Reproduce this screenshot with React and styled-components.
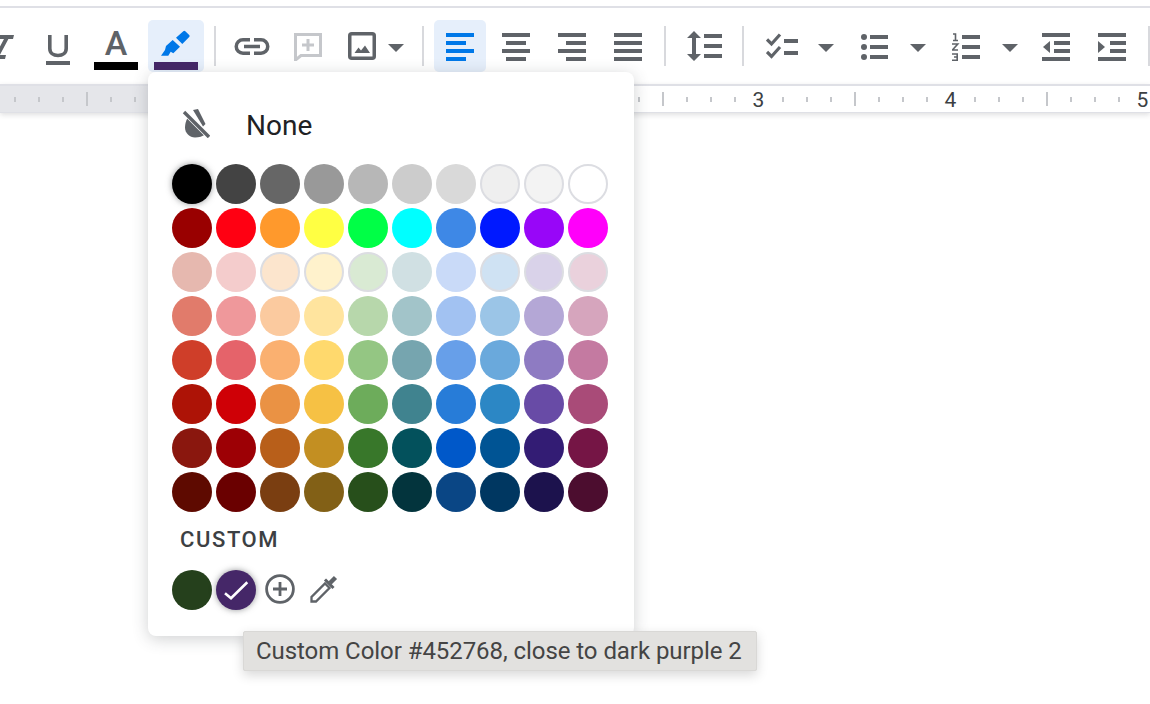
import React from "react";
import styled, { createGlobalStyle } from "styled-components";

const GREY = "#5f6368";
const BLUE = "#0078e8";

const PALETTE = [
  ["#000000", "#434343", "#666666", "#999999", "#b7b7b7", "#cccccc", "#d9d9d9", "#efefef", "#f3f3f3", "#ffffff"],
  ["#990000", "#ff0012", "#ff992c", "#ffff43", "#00ff46", "#00ffff", "#3e88e6", "#0019ff", "#9806f8", "#ff00fa"],
  ["#e6b8af", "#f4cccc", "#fce5cd", "#fff2cc", "#d9ead3", "#d0e0e3", "#c9daf8", "#cfe2f3", "#d9d2e9", "#ead1dc"],
  ["#e17b6b", "#ef989b", "#fbca9f", "#ffe49e", "#b7d7ab", "#a2c4c9", "#a2c2f2", "#9bc5e7", "#b4a7d6", "#d6a5bd"],
  ["#cf3e29", "#e5636a", "#fab070", "#ffd96d", "#94c683", "#76a5af", "#679fe9", "#6aa9dc", "#8e7bc2", "#c47aa1"],
  ["#ad1306", "#cf0006", "#ea9244", "#f6c144", "#6dac5b", "#40838f", "#277cd8", "#2c87c5", "#684ba6", "#a94b78"],
  ["#8a170e", "#9d0005", "#b85f1a", "#c38f22", "#38772a", "#03515c", "#0058c9", "#005494", "#331c74", "#751545"],
  ["#5e0a00", "#6a0000", "#7a3e11", "#826016", "#274f1b", "#03343d", "#0a4685", "#003761", "#1c124d", "#4c0d2f"]
];

const OUTLINED = {
  0: [7, 8, 9],
  2: [2, 3, 4, 7, 8, 9]
};

const RULER_CELLS = Array.from({ length: 48 }, (_, i) => i);

const App = () => (
  <Page>
    <GlobalStyle />
    <TopLine />
    <Toolbar>
      <Tool $w={54} $top={15}>
        <ItalicIcon />
      </Tool>
      <Tool $w={56} $top={15}>
        <UnderlineIcon />
      </Tool>
      <Tool $w={60} $top={11} $column>
        <LetterA>A</LetterA>
        <ColorBar $color="#000000" $gap={7} />
      </Tool>
      <Tool $w={56} $ml={2} $top={10} $column $active>
        <PenIcon />
        <ColorBar $color="#452768" $gap={5} />
      </Tool>
      <Separator $ml={10} />
      <Tool $w={60} $ml={6} $top={18}>
        <LinkIcon />
      </Tool>
      <Tool $w={52} $top={13}>
        <CommentIcon />
      </Tool>
      <Tool $w={52} $ml={2} $top={12}>
        <ImageIcon />
      </Tool>
      <Caret />
      <Separator $ml={18} />
      <Tool $w={52} $ml={10} $top={13} $active>
        <LinesIcon color={BLUE} rows={[[0, 28], [0, 20], [0, 28], [0, 20]]} />
      </Tool>
      <Tool $w={56} $ml={2} $top={13}>
        <LinesIcon rows={[[0, 28], [4, 20], [0, 28], [4, 20]]} />
      </Tool>
      <Tool $w={56} $top={13}>
        <LinesIcon rows={[[0, 28], [8, 20], [0, 28], [8, 20]]} />
      </Tool>
      <Tool $w={56} $top={13}>
        <LinesIcon rows={[[0, 28], [0, 28], [0, 28], [0, 28]]} />
      </Tool>
      <Separator $ml={8} />
      <Tool $w={60} $ml={8} $top={11}>
        <LineSpacingIcon />
      </Tool>
      <Separator $ml={8} />
      <Tool $w={72} $ml={2} $top={13}>
        <ChecklistIcon />
      </Tool>
      <Caret />
      <Tool $w={72} $ml={4} $top={13}>
        <BulletsIcon />
      </Tool>
      <Caret />
      <Tool $w={72} $ml={4} $top={13}>
        <NumberedIcon />
      </Tool>
      <Caret />
      <Tool $w={56} $ml={10} $top={13}>
        <IndentIcon />
      </Tool>
      <Tool $w={56} $top={13}>
        <IndentIcon increase />
      </Tool>
      <Separator $ml={8} />
    </Toolbar>
    <Ruler>
      {RULER_CELLS.map(i => {
        const step = i % 8;
        return (
          <RulerCell key={i}>
            {step === 7 ? (
              <RulerDigit>{(i + 1) / 8 - 1}</RulerDigit>
            ) : (
              <Tick $major={step === 3} />
            )}
          </RulerCell>
        );
      })}
    </Ruler>

    <Popup>
      <NoneRow>
        <NoneIcon />
        <NoneLabel>None</NoneLabel>
      </NoneRow>
      <SwatchGrid>
        {PALETTE.map((row, r) =>
          row.map((color, c) => (
            <Swatch
              key={color + r + c}
              $color={color}
              $outlined={OUTLINED[r] && OUTLINED[r].includes(c)}
              $focused={r === 0 && c === 0}
            />
          ))
        )}
      </SwatchGrid>
      <CustomLabel>CUSTOM</CustomLabel>
      <CustomRow>
        <Swatch $color="#25401c" />
        <Swatch $color="#452768" $focused>
          <CheckIcon />
        </Swatch>
        <PlusIcon />
        <DropperIcon />
      </CustomRow>
    </Popup>

    <Tooltip>Custom Color #452768, close to dark purple 2</Tooltip>
  </Page>
);

export default App;

const ItalicIcon = () => (
  <svg width="40" height="24" viewBox="-17 35 40 24" fill={GREY}>
    <path d="M-2 35H14L13 39H8.4L-0.2 55H6L5 59H-11L-10 55H-4.6L4 39H-3Z" />
  </svg>
);

const UnderlineIcon = () => (
  <svg width="24" height="30" viewBox="0 0 24 30">
    <path d="M3.8 0V13.5C3.8 18 7.3 20.5 12 20.5S20.2 18 20.2 13.5V0" fill="none" stroke={GREY} strokeWidth="3.6" />
    <rect y="26" width="24" height="4" fill={GREY} />
  </svg>
);

const PenIcon = () => (
  <svg width="32" height="27" viewBox="0 0 32 27" fill={BLUE}>
    <path d="M16 7.7L23.3 1.2Q24.3 0.3 25.3 1.2L29.2 5Q30.2 6 29.2 7L22.3 14Z" />
    <path d="M12.7 10L20 16.7L13.3 23.3L10.7 21.7L8.3 25.7H1L5 20L6 16Z" />
  </svg>
);

const LinkIcon = () => (
  <svg width="36" height="17" viewBox="0 0 36 17" fill="none" stroke={GREY} strokeWidth="3.5">
    <path d="M16 1.75H9a6.75 6.75 0 0 0 0 13.5H16" />
    <path d="M20 1.75H27a6.75 6.75 0 0 1 0 13.5H20" />
    <path d="M10 8.5H26" />
  </svg>
);

const CommentIcon = () => (
  <svg width="28" height="28" viewBox="0 0 28 28" fill="none" stroke="#c5c7cb" strokeWidth="3">
    <path d="M1.5 1.5H26.5V22.5H7L1.5 27Z" />
    <path d="M14 6V18M8 12H20" />
  </svg>
);

const ImageIcon = () => (
  <svg width="28" height="28" viewBox="0 0 28 28">
    <rect x="1.75" y="1.75" width="24.5" height="24.5" rx="2" fill="none" stroke={GREY} strokeWidth="3.5" />
    <path d="M6.5 21L10.5 15.5L13 18.5L17 13.5L22 21Z" fill={GREY} />
  </svg>
);

const Caret = () => (
  <CaretBox>
    <svg width="16" height="8" viewBox="0 0 16 8" fill={GREY}>
      <path d="M0 0H16L8 8Z" />
    </svg>
  </CaretBox>
);

const LinesIcon = ({ rows, color = GREY }) => (
  <svg width="28" height="28" viewBox="0 0 28 28" fill={color}>
    {rows.map(([x, w], i) => (
      <rect key={i} x={x} y={i * 8} width={w} height="4" />
    ))}
  </svg>
);

const LineSpacingIcon = () => (
  <svg width="35" height="30" viewBox="0 0 35 30" fill={GREY}>
    <path d="M7 0L14 7H9V23H14L7 30L0 23H5V7H0Z" />
    <rect x="17" y="3" width="18" height="4" />
    <rect x="17" y="13" width="18" height="4" />
    <rect x="17" y="23" width="18" height="4" />
  </svg>
);

const ChecklistIcon = () => (
  <svg width="32" height="26" viewBox="0 0 32 26" fill={GREY}>
    <path d="M1 6.5L5.5 11L14 1.5M1 19L5.5 23.5L14 14" fill="none" stroke={GREY} strokeWidth="3.2" />
    <rect x="18" y="6" width="14" height="4" />
    <rect x="18" y="18" width="14" height="4" />
  </svg>
);

const BulletsIcon = () => (
  <svg width="28" height="28" viewBox="0 0 28 28" fill={GREY}>
    {[0, 10, 20].map(y => (
      <g key={y}>
        <circle cx="4" cy={y + 4} r="3" />
        <rect x="10" y={y + 2} width="18" height="4" />
      </g>
    ))}
  </svg>
);

const NumberedIcon = () => (
  <svg width="28" height="28" viewBox="0 0 28 28" fill={GREY}>
    <path d="M1 1H3.5V7.5M1 7.5H6" fill="none" stroke={GREY} strokeWidth="1.6" />
    <path d="M0 11H5.8L0.4 17H6" fill="none" stroke={GREY} strokeWidth="1.6" />
    <path d="M0 21H5.2V27.2H0M2 24H5.2" fill="none" stroke={GREY} strokeWidth="1.6" />
    {[2, 12, 22].map(y => (
      <rect key={y} x="10" y={y} width="18" height="4" />
    ))}
  </svg>
);

const IndentIcon = ({ increase }) => (
  <svg width="28" height="28" viewBox="0 0 28 28" fill={GREY}>
    <rect width="28" height="4" />
    <rect y="24" width="28" height="4" />
    <rect x="12" y="8" width="16" height="4" />
    <rect x="12" y="16" width="16" height="4" />
    <path d={increase ? "M0 8V20L7 14Z" : "M8 8V20L1 14Z"} />
  </svg>
);

const NoneIcon = () => (
  <NoneGlyph width="28" height="31" viewBox="0 0 28 31">
    <path d="M11 3L16 2L23.5 17L21 19.5Z" fill={GREY} />
    <path d="M5.5 11L24 27C20.5 29.5 17 30.5 13 30.5C7.5 30.5 3 26 3 20.5C3 17 4 14 5.5 11Z" fill={GREY} />
    <path d="M2 5L27 30" stroke="#fff" strokeWidth="4.8" />
    <path d="M2 5L27 30" stroke={GREY} strokeWidth="3.4" />
  </NoneGlyph>
);

const CheckIcon = () => (
  <svg width="40" height="40" viewBox="0 0 40 40" fill="none" stroke="#fff" strokeWidth="2.6">
    <path d="M9 23.3L15 28.3L31.3 12.3" />
  </svg>
);

const PlusIcon = () => (
  <PlusBox width="30" height="30" viewBox="0 0 30 30" fill="none" stroke={GREY} strokeWidth="2.8">
    <circle cx="15" cy="15" r="13.4" />
    <path d="M15 8V22M8 15H22" />
  </PlusBox>
);

const DropperIcon = () => (
  <DropperBox width="28" height="28" viewBox="0 0 28 28" fill="none" stroke={GREY}>
    <path d="M1.5 26.5V22L15 8.5L19.5 13L6 26.5Z" strokeWidth="2.3" />
    <path d="M15 4.5L23.5 13" strokeWidth="3" />
    <path d="M20 8L25.5 2.5" strokeWidth="4.5" />
  </DropperBox>
);

const GlobalStyle = createGlobalStyle`
  html,
  body {
    margin: 0;
    padding: 0;
    background: #fff;
    font-family: Roboto, "Liberation Sans", sans-serif;
  }
`;

const Page = styled.div`
  position: relative;
  width: 1150px;
  height: 704px;
  overflow: hidden;
  background: #fff;
`;

const TopLine = styled.div`
  height: 2px;
  margin-top: 6px;
  background: #dfe0e6;
`;

const Toolbar = styled.div`
  display: flex;
  align-items: flex-start;
  height: 76px;
  padding-top: 12px;
  margin-left: -24px;
  width: 1174px;
  box-sizing: border-box;
`;

const Tool = styled.div`
  flex: none;
  display: flex;
  flex-direction: ${props => (props.$column ? "column" : "row")};
  align-items: ${props => (props.$column ? "center" : "flex-start")};
  justify-content: ${props => (props.$column ? "flex-start" : "center")};
  box-sizing: border-box;
  width: ${props => props.$w}px;
  height: 52px;
  margin-left: ${props => props.$ml || 0}px;
  padding-top: ${props => props.$top}px;
  border-radius: 5px;
  background: ${props => (props.$active ? "#e6effb" : "transparent")};
`;

const LetterA = styled.span`
  height: 24px;
  line-height: 24px;
  font-size: 34px;
  font-weight: 500;
  color: ${GREY};
`;

const ColorBar = styled.div`
  width: 44px;
  height: 8px;
  margin-top: ${props => props.$gap}px;
  flex: none;
  background: ${props => props.$color};
`;

const Separator = styled.div`
  flex: none;
  width: 2px;
  height: 40px;
  margin-top: 6px;
  margin-left: ${props => props.$ml || 0}px;
  background: #d8d9dd;
`;

const CaretBox = styled.div`
  flex: none;
  width: 16px;
  padding-top: 24px;
  display: flex;
`;

const Ruler = styled.div`
  position: relative;
  display: flex;
  align-items: center;
  height: 26px;
  padding-left: 3px;
  border-top: 2px solid #dfe0e6;
  border-bottom: 1px solid #dfe0e6;
  background: linear-gradient(to right, #e5e6ea 300px, #fff 300px);
  box-shadow: 0 2px 5px rgba(60, 64, 67, 0.16);
`;

const RulerCell = styled.div`
  flex: none;
  width: 24px;
  display: flex;
  justify-content: center;
  align-items: center;
`;

const Tick = styled.div`
  width: 2px;
  height: ${props => (props.$major ? 14 : 5)}px;
  background: #c5c7cb;
`;

const RulerDigit = styled.span`
  font-size: 21px;
  line-height: 24px;
  margin: 1px 1px 0 0;
  color: #3c4043;
`;

const Popup = styled.div`
  position: absolute;
  top: 72px;
  left: 148px;
  width: 486px;
  box-sizing: border-box;
  padding: 0 24px 26px;
  background: #fff;
  border-radius: 8px;
  box-shadow: 0 3px 16px rgba(60, 64, 67, 0.24);
`;

const NoneRow = styled.div`
  display: flex;
  align-items: center;
  gap: 36px;
  height: 76px;
  padding: 16px 0 0 10px;
`;

const NoneGlyph = styled.svg`
  flex: none;
  margin-top: -8px;
`;

const NoneLabel = styled.span`
  font-size: 28px;
  line-height: 32px;
  color: #202124;
`;

const SwatchGrid = styled.div`
  display: grid;
  grid-template-columns: repeat(10, 40px);
  gap: 4px;
`;

const Swatch = styled.div`
  width: 40px;
  height: 40px;
  box-sizing: border-box;
  flex: none;
  border-radius: 50%;
  background: ${props => props.$color};
  border: ${props => (props.$outlined ? "2px solid #dcdde2" : "none")};
  box-shadow: ${props =>
    props.$focused ? "0 0 6px rgba(60, 64, 67, 0.55)" : "none"};
`;

const CustomLabel = styled.div`
  margin: 16px 0 0 8px;
  font-size: 22px;
  font-weight: 500;
  line-height: 24px;
  letter-spacing: 1.6px;
  color: #3c4043;
`;

const CustomRow = styled.div`
  display: flex;
  align-items: center;
  gap: 4px;
  margin-top: 18px;
`;

const PlusBox = styled.svg`
  margin: -2px 0 0 5px;
`;

const DropperBox = styled.svg`
  margin: -2px 0 0 11px;
`;

const Tooltip = styled.div`
  position: absolute;
  top: 631px;
  left: 243px;
  width: 514px;
  height: 40px;
  box-sizing: border-box;
  padding-left: 12px;
  font-size: 24px;
  line-height: 38px;
  letter-spacing: -0.06px;
  white-space: nowrap;
  color: #444444;
  background: #e2e1df;
  border: 1px solid #d9d8d6;
  border-radius: 2px;
  box-shadow: 0 4px 12px rgba(0, 0, 0, 0.16);
`;
